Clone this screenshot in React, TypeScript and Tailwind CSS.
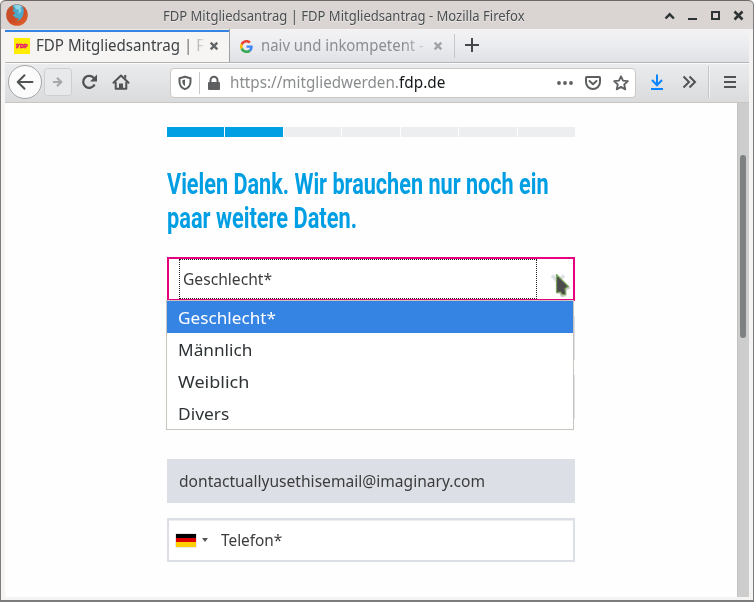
import { useLayoutEffect, useRef, useState } from "react";

type FitProps = { text: string; width: number; className?: string };

// One line of text, condensed or widened to an exact advance width.
function Fit({ text, width, className = "" }: FitProps) {
  const ref = useRef<HTMLSpanElement>(null);
  const [scale, setScale] = useState(1);
  useLayoutEffect(() => {
    if (ref.current) setScale(width / ref.current.offsetWidth);
  }, [text, width]);
  return (
    <span className="block" style={{ width }}>
      <span
        ref={ref}
        className={`inline-block origin-left whitespace-pre align-top ${className}`}
        style={{ transform: `scaleX(${scale})` }}
      >
        {text}
      </span>
    </span>
  );
}

function FirefoxLogo() {
  return (
    <svg className="ml-1 mt-[2px] size-6" viewBox="0 0 24 24">
      <defs>
        <linearGradient id="fox" x1="0" y1="0" x2="1" y2="1">
          <stop offset="0" stopColor="#b5532c" />
          <stop offset="0.5" stopColor="#cf4a25" />
          <stop offset="1" stopColor="#e0632c" />
        </linearGradient>
      </defs>
      <circle cx="12" cy="12" r="10.800" fill="url(#fox)" />
      <path d="M7.500 2.500C11 .8 16 1 18.200 4.200c1.200 3 .6 7-1 9.800-1.200 2.500-3.200 4-5.700 3.800 1.800-1 2.300-2 2-3-1.500.8-3.500.3-4-1.200L7.500 12.500l2-3L7.200 8l1.600-1.500z" fill="#4ba9cc" />
      <path d="M9 2.300c3-1 6-.6 8 1l-1.500 1.700 1 3-3 3 .5-4-3-1z" fill="#8dd5e5" />
      <path d="M2 6.500c1.500 1 3.500.8 6 2l2.300 1.200L8 12.200c-1 2.800 1 5.500 4.500 5.800-4 1.500-9-1.500-10.500-5z" fill="#c84d28" />
    </svg>
  );
}

function WindowButtons() {
  return (
    <svg className="h-[29px] w-[90px]" viewBox="660 0 90 29" fill="none" stroke="#2e3436" strokeWidth="2.400">
      <path d="M665.500 18.500l4.200-4.200 4.200 4.200" />
      <path d="M688 19h9" strokeWidth="2" />
      <path d="M712 12h7v7h-7z" strokeWidth="2" />
      <path d="M734.500 11.500l8 8m0-8l-8 8" strokeWidth="2.600" />
    </svg>
  );
}

function CloseGlyph({ color }: { color: string }) {
  return (
    <svg className="block size-2.5" viewBox="0 0 10 10" stroke={color} strokeWidth="2.400">
      <path d="M1.700 1.700l6.600 6.600m0-6.600l-6.600 6.600" />
    </svg>
  );
}

function GoogleLogo() {
  return (
    <svg className="block size-[13px]" viewBox="0 0 48 48">
      <path fill="#EA4335" d="M24 9.500c3.540 0 6.710 1.220 9.210 3.600l6.850-6.850C35.900 2.380 30.470 0 24 0 14.620 0 6.510 5.380 2.560 13.220l7.980 6.190C12.430 13.720 17.740 9.500 24 9.500z" />
      <path fill="#4285F4" d="M46.980 24.550c0-1.570-.15-3.090-.38-4.550H24v9.020h12.940c-.58 2.960-2.260 5.480-4.780 7.180l7.730 6c4.510-4.180 7.090-10.360 7.090-17.650z" />
      <path fill="#FBBC05" d="M10.530 28.590c-.48-1.450-.76-2.990-.76-4.590s.27-3.140.76-4.590l-7.980-6.190C.92 16.460 0 20.120 0 24c0 3.880.92 7.540 2.560 10.780l7.970-6.190z" />
      <path fill="#34A853" d="M24 48c6.480 0 11.930-2.130 15.890-5.810l-7.730-6c-2.150 1.450-4.920 2.300-8.160 2.300-6.260 0-11.570-4.220-13.470-9.910l-7.980 6.190C6.510 42.620 14.620 48 24 48z" />
    </svg>
  );
}

function TitleBar() {
  return (
    <div className="flex h-[29px] items-start rounded-t-[5px] border-t border-[#6d6765] bg-[#dad5d2]">
      <FirefoxLogo />
      <div className="ml-[134px] h-[28px] leading-[31px]">
        <Fit className="text-[13.5px] text-[#4a4f51] [text-shadow:0_1px_0_#eeebe9]" text="FDP Mitgliedsantrag | FDP Mitgliedsantrag - Mozilla Firefox" width={362} />
      </div>
      <div className="-mt-px ml-auto mr-[3px]">
        <WindowButtons />
      </div>
    </div>
  );
}

function TabStrip() {
  return (
    <div className="flex h-[34px] items-stretch border-b border-[#b2b4b6] bg-linear-to-b from-[#f3f3f6] via-[#ebecef] to-[#e0e1e4]">
      <div className="flex w-[224px] items-center bg-[#f6f5f4] shadow-[inset_0_1px_0_#ece9e8,inset_0_3px_0_#3584e4]">
        <div className="ml-[9px] mt-px flex size-4 items-center justify-center bg-[#ffed00] leading-[8px]">
          <Fit className="font-['Liberation_Serif'] text-[7px] leading-[8px] font-bold text-[#e5007d] [-webkit-text-stroke:0.4px_#e5007d]" text="FDP" width={12} />
        </div>
        <div className="ml-[6px] w-[170px] leading-[35px] mask-[linear-gradient(to_right,#000_146px,transparent_170px)]">
          <Fit className="text-[16px] text-[#3f4345]" text="FDP Mitgliedsantrag | F" width={168} />
        </div>
        <div className="ml-[3px] mt-px"><CloseGlyph color="#646769" /></div>
      </div>
      <div className="flex w-[225px] items-center border-l border-[#9da0a3]">
        <div className="ml-[10px] mt-px"><GoogleLogo /></div>
        <div className="ml-[8px] w-[166px] leading-[35px] mask-[linear-gradient(to_right,#000_142px,transparent_170px)]">
          <Fit className="text-[16px] text-[#8b8d90]" text="naiv und inkompetent -" width={163} />
        </div>
        <div className="ml-[6px] mt-px"><CloseGlyph color="#a1a3a4" /></div>
      </div>
      <svg className="h-[33px] w-8" viewBox="454 29 32 33" fill="none">
        <path d="M454.500 34v24" stroke="#c6c7c9" />
        <path d="M465 45h14m-7-7v14" stroke="#45484b" strokeWidth="2" />
      </svg>
    </div>
  );
}

function NavButtons() {
  return (
    <svg className="h-[39px] w-[165px]" viewBox="5 63 165 39" fill="none" stroke="#505254" strokeWidth="2">
      <circle cx="25" cy="82" r="16.500" fill="#fbfbfb" stroke="#a5a6a7" strokeWidth="1" />
      <path d="M18 82h14.500M24.500 75.200L17.700 82l6.800 6.800" strokeLinecap="round" strokeLinejoin="round" />
      <rect x="44.500" y="68.500" width="27" height="27" rx="3" fill="#e8e9eb" stroke="#cdced0" strokeWidth="1" />
      <path d="M53 82h8m-4-4.200l4.200 4.200-4.200 4.200" stroke="#a7a8aa" strokeWidth="2.200" />
      <path d="M94 78.200A6 6 0 1 0 94.600 84.400" strokeWidth="2.300" />
      <path d="M97 74.500v7h-7z" fill="#505254" stroke="none" />
      <path d="M113.500 82.700l7.500-7.200 7.500 7.200" strokeLinejoin="round" strokeLinecap="round" />
      <path d="M115.700 82v6.800h10.600V82" strokeLinejoin="round" />
      <path d="M119 89v-5.500h4V89z" fill="#505254" stroke="none" />
      <path d="M124.200 75h2v4l-2-2z" fill="#505254" stroke="none" />
    </svg>
  );
}

function SiteIcons() {
  return (
    <svg className="h-[28px] w-[52px]" viewBox="171 68 52 28" fill="none">
      <path d="M179.500 77.200l5.500-1.400 5.500 1.400v3.500c0 3.600-2 6-5.500 7.500-3.500-1.500-5.500-3.900-5.500-7.500z" stroke="#5d5f61" strokeWidth="2" strokeLinejoin="round" />
      <path d="M185 78.500v6.800c-1.700-1-2.700-2.500-2.700-4.700v-1.400z" fill="#5d5f61" />
      <path d="M199.500 71v22" stroke="#c8c8c8" />
      <rect x="208" y="81" width="12" height="8" rx="1" fill="#5d5f61" />
      <path d="M210.500 82v-2.800a3.500 3.500 0 0 1 7 0V82" stroke="#5d5f61" strokeWidth="2" />
    </svg>
  );
}

function PageActions() {
  return (
    <svg className="h-[28px] w-[84px]" viewBox="551 68 84 28" fill="none" stroke="#5d5f61" strokeWidth="2">
      <g fill="#5d5f61" stroke="none">
        <circle cx="559" cy="82" r="1.900" />
        <circle cx="565" cy="82" r="1.900" />
        <circle cx="571" cy="82" r="1.900" />
      </g>
      <path d="M586.800 76h12.400a.8.8 0 0 1 .8.800V81a7 7 0 0 1-14 0v-4.200a.8.8 0 0 1 .8-.8z" />
      <path d="M589.500 80l3.500 3.300 3.500-3.300" strokeLinecap="round" strokeLinejoin="round" />
      <path d="M621 75.300l2 4.400 4.900.5-3.700 3.300 1.100 4.900-4.300-2.500-4.300 2.500 1.100-4.900-3.700-3.300 4.900-.5z" strokeWidth="1.800" strokeLinejoin="round" />
    </svg>
  );
}

function ToolbarEnd() {
  return (
    <svg className="h-[39px] w-[113px]" viewBox="636 63 113 39" fill="none" stroke="#505254" strokeWidth="2">
      <path d="M657 74.500V85m-5-5l5 5.200 5-5.200M651 89h12" stroke="#0a84ff" />
      <path d="M683.500 76.500l5.500 5.500-5.500 5.500M689.500 76.500L695 82l-5.500 5.500" />
      <path d="M708.500 66v32" stroke="#c3c4c6" strokeWidth="1" />
      <path d="M709.500 66v32" stroke="#f4f4f5" strokeWidth="1" />
      <path d="M724 77h12M724 82h12M724 87h12" />
    </svg>
  );
}

function Toolbar() {
  return (
    <div className="flex h-[40px] items-center border-b border-[#cac5c0] bg-linear-to-b from-[#ebecee] to-[#d9dbdd] shadow-[inset_0_1px_0_#fafafa]">
      <NavButtons />
      <div className="flex h-[30px] w-[466px] items-center rounded-[4px] border border-[#cdc7c2] bg-white">
        <SiteIcons />
        <div className="mb-[2px] ml-[7px] flex text-[16px] leading-[26px]">
          <Fit className="text-[#8a8c8e]" text="https://mitgliedwerden." width={169} />
          <Fit className="text-[#15181a]" text="fdp.de" width={46} />
        </div>
        <div className="ml-auto flex"><PageActions /></div>
      </div>
      <ToolbarEnd />
    </div>
  );
}

const OPTIONS = [
  { label: "Geschlecht*", width: 98 },
  { label: "Männlich", width: 74 },
  { label: "Weiblich", width: 71 },
  { label: "Divers", width: 51 },
];

function GenderSelect() {
  return (
    <div className="relative flex h-[44px] border-2 border-[#e5007d] bg-white">
      <div className="ml-[10px] h-[40px] w-[358px] border border-dotted border-[#222] pl-[3px] leading-[38px]">
        <Fit className="text-[16.5px] text-[#3c3c3c]" text="Geschlecht*" width={89} />
      </div>
      <svg className="ml-[12px] mt-[10px] h-[30px] w-[24px]" viewBox="549 269 24 30">
        <path d="M552 275.500l6 6 6-6" fill="none" stroke="#dcdfe6" strokeWidth="3.500" />
        <path d="M557 275l13 12-4 2-.5 6-5 1-2-4-2.500 1z" fill="#555" opacity="0.3" transform="translate(.7 1.200)" />
        <path d="M556.500 274.500l12 12-3.500 2 .6 4.500v1.500l-3.500.2-1.600-2.700-4 .5z" fill="#4c4c4c" stroke="#7aa75b" strokeWidth="1.200" strokeLinejoin="round" />
      </svg>
      <div className="absolute -left-[3px] top-[41px] z-10 w-[408px] border border-[#c8c4be] bg-white">
        {OPTIONS.map((option, index) => (
          <div
            key={option.label}
            className={`h-[32px] pl-[11px] text-[17px] leading-[33px] ${index === 0 ? "bg-[#3584e4] text-white" : "text-[#2e3436]"}`}
          >
            <Fit text={option.label} width={option.width} />
          </div>
        ))}
      </div>
    </div>
  );
}

function PhoneField() {
  return (
    <div className="mt-[15px] flex h-[44px] items-center border-2 border-[#dcdfe6] bg-white pl-[7px] shadow-[inset_0_1px_1px_#eee]">
      <div className="flex h-[13px] w-5 flex-col shadow-[0_0_1px_#777]">
        <div className="h-[4px] bg-black" />
        <div className="h-[4px] bg-[#dd0000]" />
        <div className="h-[5px] bg-[#ffce00]" />
      </div>
      <div className="ml-[6px] h-0 w-0 border-x-[3px] border-t-4 border-x-transparent border-t-[#555]" />
      <div className="ml-[13px] leading-[40px]">
        <Fit className="text-[16.5px] text-[#3c3c3c]" text="Telefon*" width={61.500} />
      </div>
    </div>
  );
}

function Form() {
  return (
    <main className="ml-[162px] w-[408px] pt-[24px]">
      <div className="grid h-[10px] grid-cols-7 gap-px">
        {[true, true, false, false, false, false, false].map((done, index) => (
          <div key={index} className={done ? "bg-[#009ee3]" : "bg-[#edeef0]"} />
        ))}
      </div>
      <h1 className="mt-[30px] font-['Roboto'] text-[29px] leading-[34px] font-bold text-[#009ee3]">
        <Fit text="Vielen Dank. Wir brauchen nur noch ein" width={382} />
        <Fit text="paar weitere Daten." width={190} />
      </h1>
      <div className="mt-[22px]">
        <GenderSelect />
        <div className="mt-[15px] h-[44px] border-2 border-[#dcdfe6]" />
        <div className="mt-[15px] h-[44px] border-2 border-[#dcdfe6]" />
        <div className="mt-[40px] h-[44px] bg-[#dcdfe6] pl-[12px] leading-[44px]">
          <Fit className="text-[16.5px] text-[#3c3c3c]" text="dontactuallyusethisemail@imaginary.com" width={306} />
        </div>
        <PhoneField />
      </div>
    </main>
  );
}

export default function App() {
  return (
    <div className="h-[602px] w-[754px] overflow-hidden bg-white font-['Noto_Sans',sans-serif]">
      <div className="flex h-[602px] flex-col rounded-t-[5px] border-x border-b-2 border-[#7f7d7b] bg-[#f5f4f2]">
        <TitleBar />
        <div className="ml-[4px] w-[744px]">
          <TabStrip />
          <Toolbar />
          <div className="flex h-[494px] bg-[#fefefe]">
            <div className="w-[732px]"><Form /></div>
            <div className="w-[12px] border-l border-[#c2c2c0] bg-[#cdcdcd] pl-[2px] pt-[52px]">
              <div className="h-[183px] w-[6px] rounded-full bg-[#7d8182]" />
            </div>
          </div>
        </div>
      </div>
    </div>
  );
}
